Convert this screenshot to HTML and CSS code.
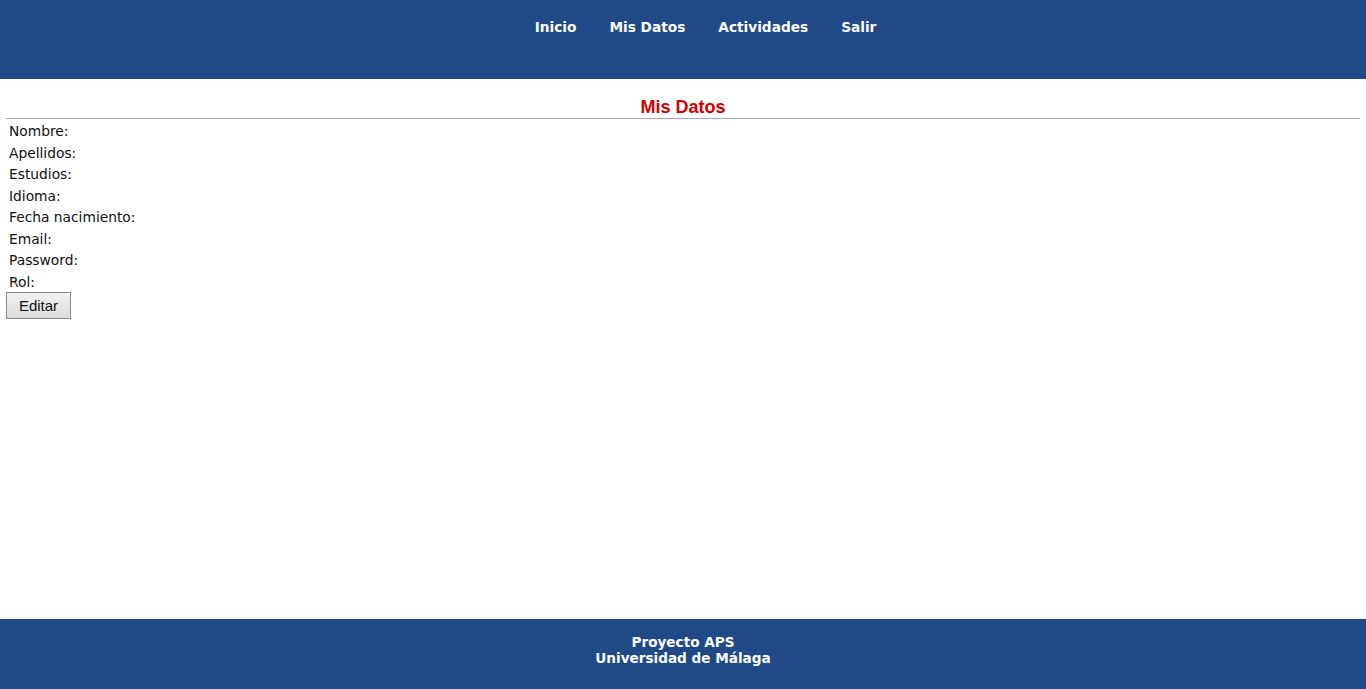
FILE: index.html
```html
<!DOCTYPE html>
<html lang="es">
<head>
<meta charset="utf-8">
<title>Mis Datos</title>
<link rel="stylesheet" href="styles.css">
</head>
<body>
<header class="topbar">
  <nav class="nav">
    <a href="#">Inicio</a>
    <a href="#">Mis Datos</a>
    <a href="#">Actividades</a>
    <a href="#">Salir</a>
  </nav>
</header>
<main class="content">
  <h2 class="title">Mis Datos</h2>
  <div class="fields">
    <div class="field">Nombre:</div>
    <div class="field">Apellidos:</div>
    <div class="field">Estudios:</div>
    <div class="field">Idioma:</div>
    <div class="field">Fecha nacimiento:</div>
    <div class="field">Email:</div>
    <div class="field">Password:</div>
    <div class="field">Rol:</div>
  </div>
  <button class="btn" type="button">Editar</button>
</main>
<footer class="footer">
  <div>Proyecto APS</div>
  <div>Universidad de Málaga</div>
</footer>
</body>
</html>
```
FILE: styles.css
```css
html, body {
  margin: 0;
  padding: 0;
  height: 100%;
}
body {
  display: flex;
  flex-direction: column;
  background: #ffffff;
  font-family: "DejaVu Sans", Verdana, sans-serif;
}
.topbar {
  background: #204a87;
  height: 79px;
  box-sizing: border-box;
  padding-top: 18px;
}
.nav {
  display: flex;
  justify-content: center;
  gap: 33px;
  padding-left: 45px;
}
.nav a {
  color: #ffffff;
  text-decoration: none;
  font-weight: bold;
  font-size: 13.7px;
  line-height: 18px;
}
.content {
  flex: 1;
  padding: 0 6px;
}
.title {
  margin: 17px 0 0;
  text-align: center;
  font-family: "Liberation Sans", Arial, sans-serif;
  font-weight: bold;
  font-size: 18px;
  line-height: 22px;
  color: #d40000;
  border-bottom: 1px solid #a8a8a8;
  padding-bottom: 0;
}
.fields {
  padding: 2px 3px 0;
  margin-bottom: -1px;
}
.field {
  font-size: 13.8px;
  line-height: 21.5px;
  color: #111;
}
.btn {
  display: block;
  font-family: "Liberation Sans", Arial, sans-serif;
  font-size: 15px;
  width: 65px;
  height: 27px;
  padding: 0;
  border: 1px solid #8a8a8a;
  background: linear-gradient(#f2f2f2, #dcdcdc);
  color: #111;
}
.footer {
  background: #204a87;
  height: 70px;
  box-sizing: border-box;
  padding-top: 15px;
  text-align: center;
  color: #ffffff;
  font-weight: bold;
  font-size: 13.6px;
  line-height: 16px;
}
```
